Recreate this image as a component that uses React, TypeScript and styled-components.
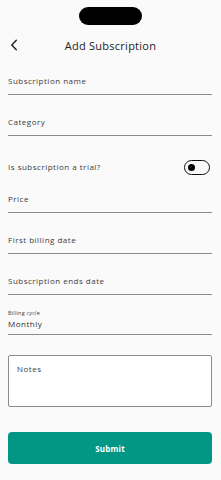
import styled, { createGlobalStyle } from "styled-components";

const GlobalStyle = createGlobalStyle`
    html, body {
        margin: 0;
        padding: 0;
        background: #fafafa;
    }
    * {
        box-sizing: border-box;
    }
`

const fields = [
    {label: "First billing date"},
    {label: "Subscription ends date"},
]

export default function App() {
    return (
        <Screen>
            <GlobalStyle/>
            <NotchBar>
                <Notch/>
            </NotchBar>
            <Header>
                <BackButton aria-label="Back">
                    <svg width="8" height="12" viewBox="0 0 8 12">
                        <path d="M6.3 1.3 1.8 6l4.5 4.7" stroke="#1e1e1e" strokeWidth="1.4" fill="none"
                              strokeLinecap="round" strokeLinejoin="round"/>
                    </svg>
                </BackButton>
                <Title>Add Subscription</Title>
            </Header>
            <Form>
                <Field $top={18}>
                    <Label>Subscription name</Label>
                </Field>
                <Field>
                    <Label>Category</Label>
                </Field>
                <ToggleRow>
                    <Label>Is subscription a trial?</Label>
                    <Toggle>
                        <Knob/>
                    </Toggle>
                </ToggleRow>
                <Field $top={19}>
                    <Label>Price</Label>
                </Field>
                {fields.map(f => (
                    <Field key={f.label}>
                        <Label>{f.label}</Label>
                    </Field>
                ))}
                <Field $top={15} $bottom={5}>
                    <SmallLabel>Billing cycle</SmallLabel>
                    <Value>Monthly</Value>
                </Field>
                <Notes>
                    <Label>Notes</Label>
                </Notes>
                <SubmitButton>Submit</SubmitButton>
            </Form>
        </Screen>
    );
}

const Screen = styled.div`
    width: 221px;
    min-height: 480px;
    background: #fafafa;
    font-family: "Open Sans", "Liberation Sans", sans-serif;
    color: #333;`

const NotchBar = styled.div`
    height: 32px;
    display: flex;
    justify-content: center;
    padding-top: 7px;`

const Notch = styled.div`
    width: 63px;
    height: 18px;
    border-radius: 9px;
    background: #000;`

const Header = styled.div`
    position: relative;
    height: 26px;
    display: flex;
    align-items: center;
    justify-content: center;`

const BackButton = styled.div`
    position: absolute;
    left: 10px;
    top: 7px;
    display: flex;`

const Title = styled.h1`
    margin: 0;
    font-size: 11px;
    font-weight: 400;
    color: #222;
    letter-spacing: 0.25px;`

const Form = styled.div`
    display: flex;
    flex-direction: column;
    padding: 0 9px 0 8px;`

const Field = styled.div<{ $top?: number; $bottom?: number }>`
    padding: ${p => p.$top ?? 22}px 0 ${p => p.$bottom ?? 8}px;
    border-bottom: 1px solid #8c8c8c;
    display: flex;
    flex-direction: column;`

const Label = styled.span`
    font-size: 8px;
    line-height: 10px;
    color: #3a3a3a;
    letter-spacing: 0.5px;`

const SmallLabel = styled.span`
    font-size: 5.5px;
    line-height: 7px;
    color: #444;
    letter-spacing: 0.2px;`

const Value = styled.span`
    margin-top: 2px;
    font-size: 8px;
    line-height: 10px;
    color: #2a2a2a;
    letter-spacing: 0.5px;`

const ToggleRow = styled.div`
    margin-top: 23px;
    height: 16px;
    display: flex;
    align-items: center;
    justify-content: space-between;
    padding-right: 2px;`

const Toggle = styled.div`
    width: 26px;
    height: 15px;
    border: 1.5px solid #111;
    border-radius: 8px;
    display: flex;
    align-items: center;
    padding-left: 2.5px;`

const Knob = styled.div`
    width: 7px;
    height: 7px;
    border-radius: 50%;
    background: #000;`

const Notes = styled.div`
    margin-top: 20px;
    height: 52px;
    border: 1px solid #8a8a8a;
    border-radius: 2px;
    padding: 8px 8px;
    background: #fff;
    display: flex;
    flex-direction: column;`

const SubmitButton = styled.button`
    margin-top: 25px;
    height: 32px;
    border: none;
    border-radius: 4px;
    background: #029686;
    color: #fff;
    font-family: inherit;
    font-size: 8px;
    font-weight: 700;
    letter-spacing: 0.2px;`
